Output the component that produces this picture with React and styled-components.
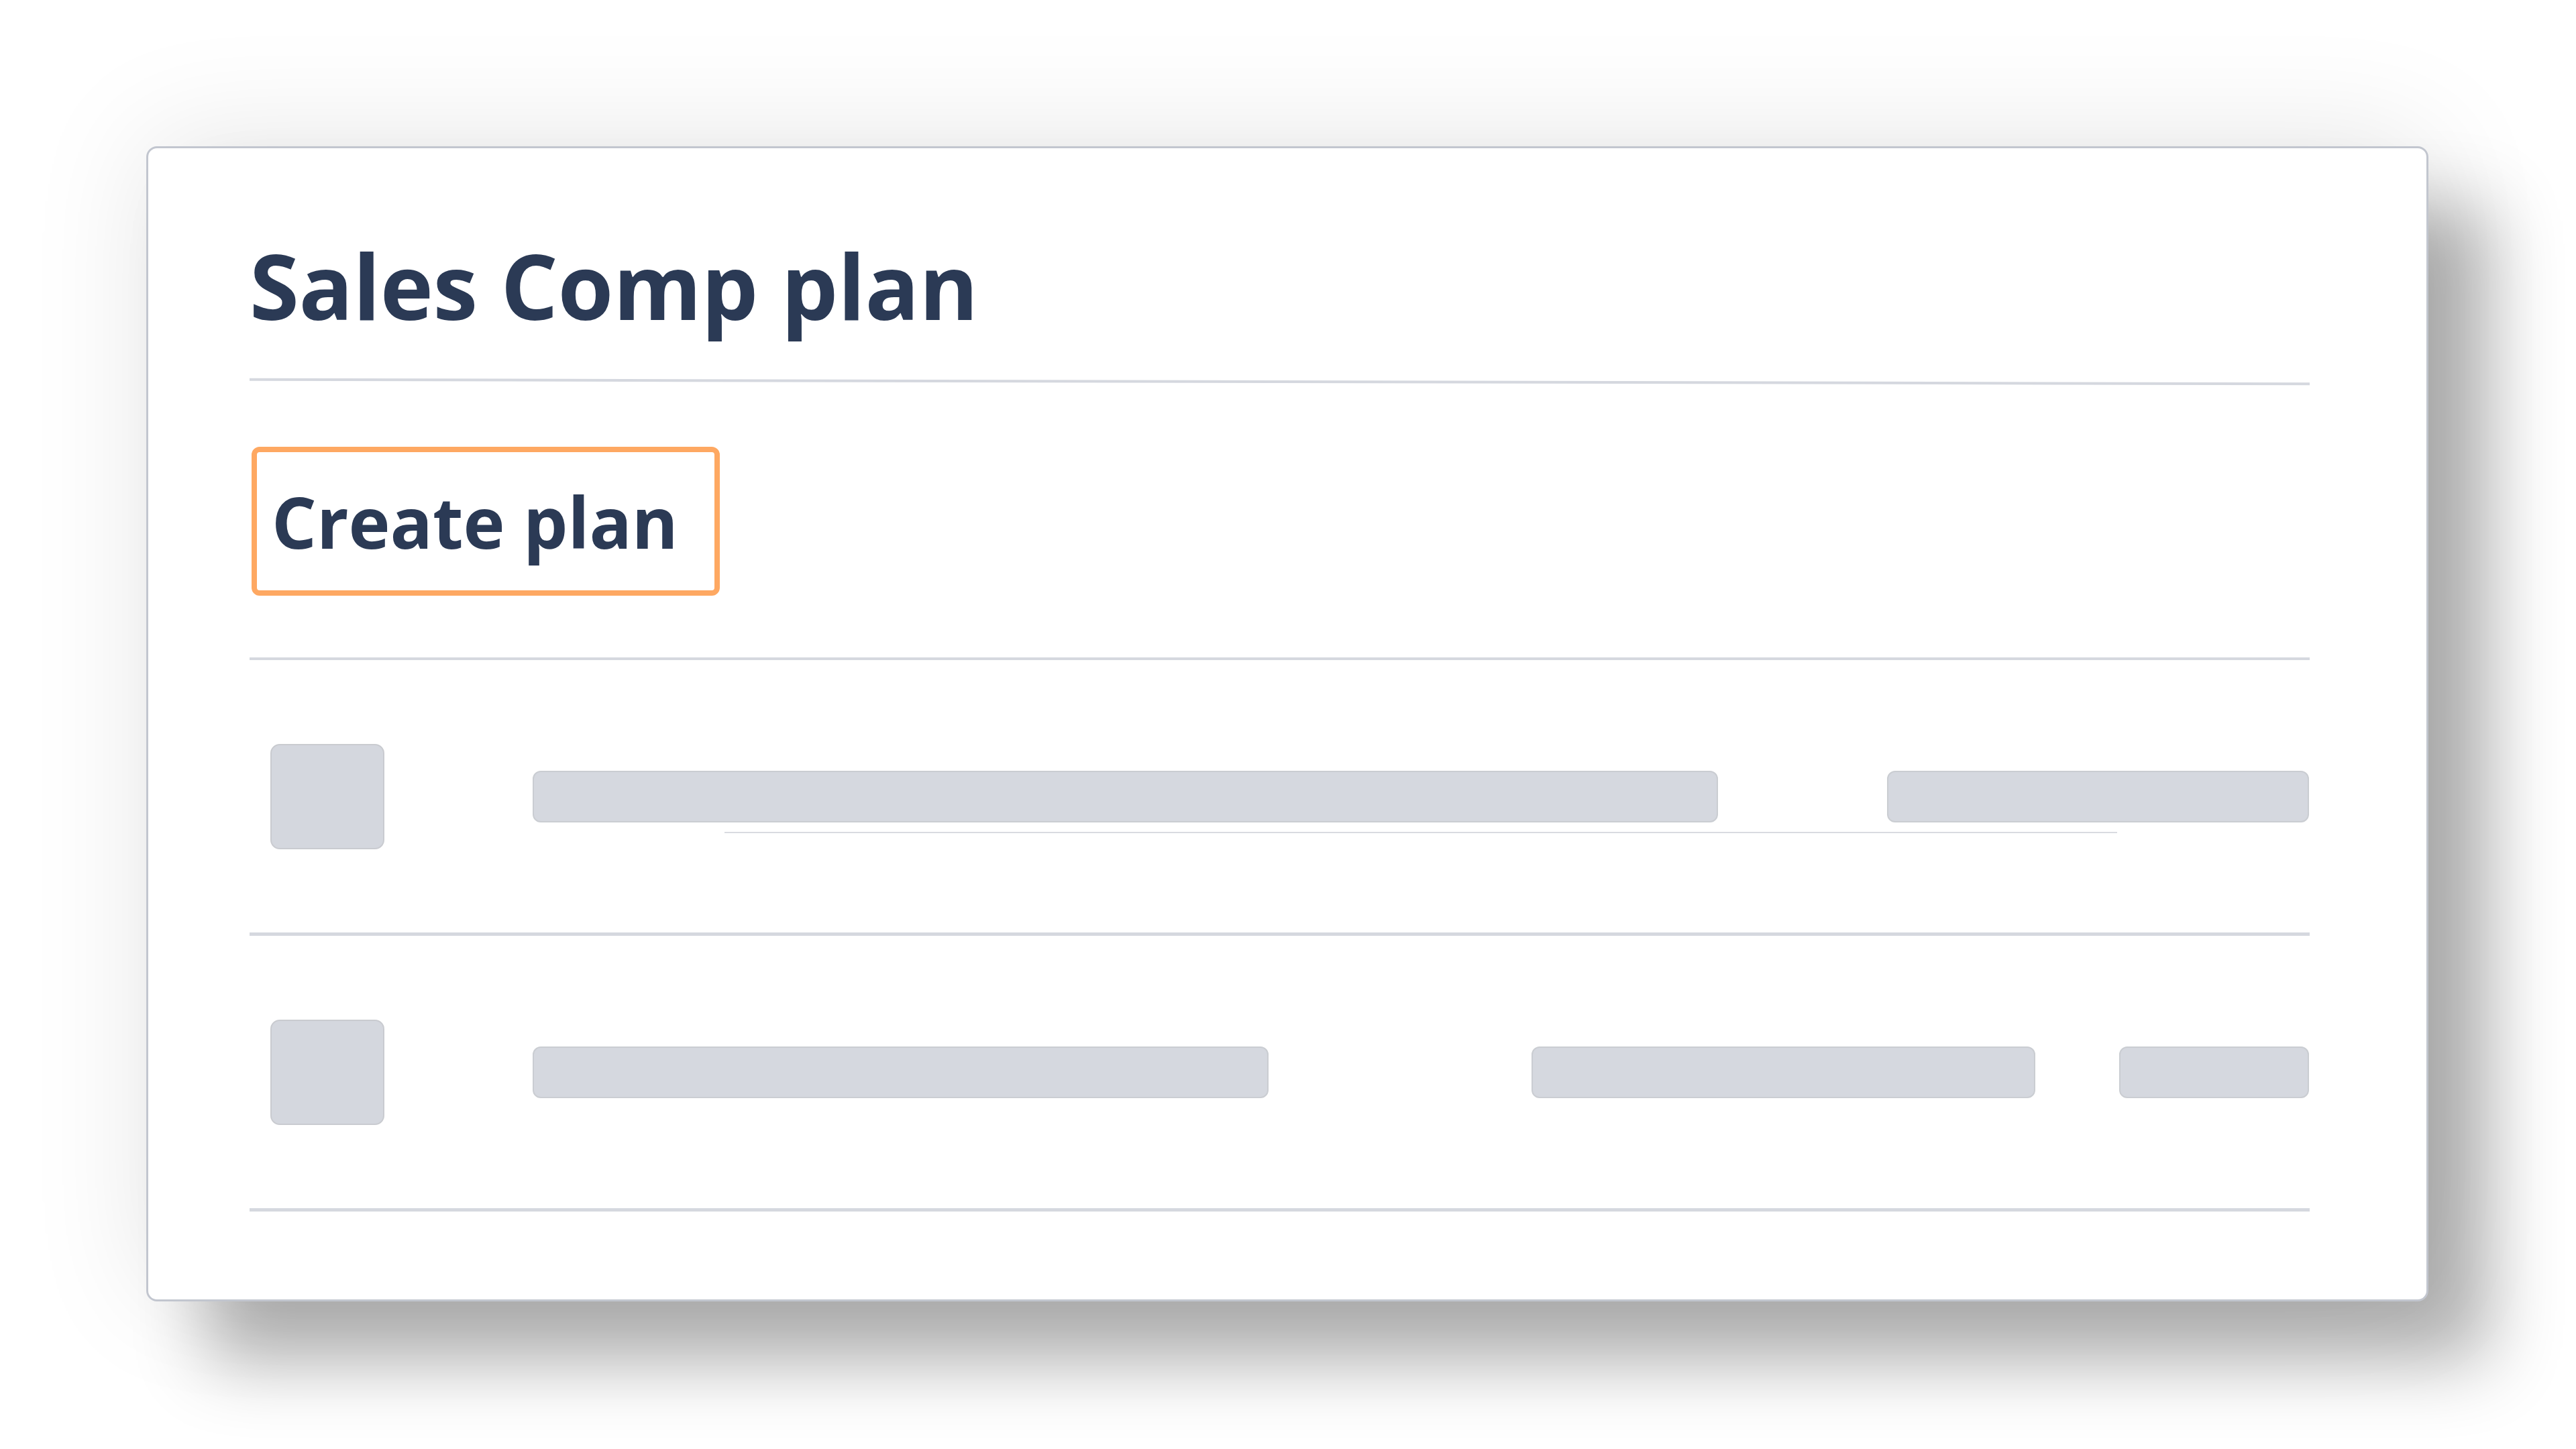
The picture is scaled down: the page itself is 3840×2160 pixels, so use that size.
import styled, { createGlobalStyle } from "styled-components";

const GlobalStyle = createGlobalStyle`
  html, body {
    margin: 0;
    padding: 0;
    background: #ffffff;
  }
  body {
    font-family: "Open Sans", "Liberation Sans", sans-serif;
  }
`;

const Page = styled.div`
  width: 3840px;
  height: 2160px;
  padding: 218px 0 0 218px;
  box-sizing: border-box;
  overflow: hidden;
`;

const Card = styled.div`
  width: 3402px;
  height: 1722px;
  box-sizing: border-box;
  background: #ffffff;
  border: 3px solid #c2c6cf;
  border-radius: 16px;
  padding: 137px 174px 0 151px;
  box-shadow: 0 -10px 180px rgba(0, 0, 0, 0.1), 90px 90px 110px rgba(0, 0, 0, 0.3);
  display: flex;
  flex-direction: column;
`;

const Title = styled.h1`
  margin: 0;
  font-size: 134px;
  line-height: 135px;
  font-weight: 700;
  letter-spacing: -0.3px;
  color: #2b3a55;
`;

const Divider = styled.div`
  height: ${(p) => p.$thick || 4}px;
  background: #d5d8df;
  flex-shrink: 0;
  transform: rotate(${(p) => p.$tilt || 0}deg);
`;

const Toolbar = styled.div`
  padding: 95px 0 92px 3px;
  display: flex;
`;

const Button = styled.div`
  width: 698px;
  height: 222px;
  box-sizing: border-box;
  border: 8px solid #fea862;
  border-radius: 12px;
  display: flex;
  align-items: center;
  padding-left: 22px;
  font-size: 105px;
  font-weight: 700;
  color: #2b3a55;
`;

const Row = styled.div`
  height: 406px;
  display: flex;
  align-items: center;
  padding-left: 31px;
`;

const Thumb = styled.div`
  width: 170px;
  height: 157px;
  box-sizing: border-box;
  background: #d4d7de;
  border: 2px solid #c9cbd0;
  border-radius: 14px;
  flex-shrink: 0;
`;

const Bars = styled.div`
  position: relative;
  flex: 1;
  display: flex;
  align-items: center;
  margin-left: 221px;

  ${(p) =>
    p.$underline &&
    `
    &::after {
      content: "";
      position: absolute;
      left: 286px;
      width: 2076px;
      top: 91px;
      height: 2px;
      background: #d9dbe1;
    }
  `}
`;

const Bar = styled.div`
  width: ${(p) => p.$w}px;
  margin-left: ${(p) => p.$gap || 0}px;
  height: 77px;
  box-sizing: border-box;
  background: #d5d8df;
  border: 2px solid #cacdd2;
  border-radius: 12px;
  flex-shrink: 0;
`;

const rows = [
  { underline: true, bars: [{ w: 1767 }, { w: 629, gap: 252 }] },
  { bars: [{ w: 1097 }, { w: 751, gap: 392 }, { w: 283, gap: 125 }] },
];

export default function App() {
  return (
    <>
      <GlobalStyle />
      <Page>
        <Card>
          <Title>Sales Comp plan</Title>
          <Divider style={{ marginTop: 74 }} $tilt={0.12} />
          <Toolbar>
            <Button>Create plan</Button>
          </Toolbar>
          <Divider />
          {rows.map((row, i) => (
            <div key={i}>
              <Row>
                <Thumb />
                <Bars $underline={row.underline}>
                  {row.bars.map((b, j) => (
                    <Bar key={j} $w={b.w} $gap={b.gap} />
                  ))}
                </Bars>
              </Row>
              <Divider $thick={5} />
            </div>
          ))}
        </Card>
      </Page>
    </>
  );
}
